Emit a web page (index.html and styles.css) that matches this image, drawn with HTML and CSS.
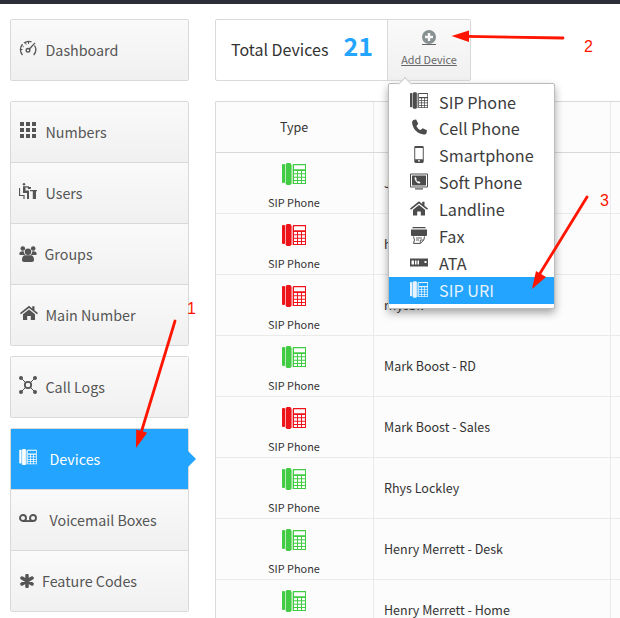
FILE: index.html
```
<!DOCTYPE html>
<html lang="en">
<head>
<meta charset="utf-8">
<title>Devices</title>
<link rel="stylesheet" href="styles.css">
</head>
<body>
<svg class="defs" width="0" height="0" aria-hidden="true">
  <symbol id="desk" viewBox="0 0 24 22">
    <rect x="0" y="1" width="3" height="19" rx="1"/>
    <rect x="3" y="1" width="7" height="20" opacity=".35"/>
    <rect x="4" y="0" width="5" height="22" rx="1.2"/>
    <rect x="9" y="2" width="2" height="19" opacity=".35"/>
    <path fill-rule="evenodd" d="M11 1h13v20H11zM12 2.300v4h11v-4zM12 8v2.200h3V8zm4 0v2.200h3V8zm4 0v2.200h3V8zM12 11.200v2.600h3v-2.600zm4 0v2.600h3v-2.600zm4 0v2.600h3v-2.600zM12 14.800V17h3v-2.200zm4 0V17h3v-2.200zm4 0V17h3v-2.200zM12 18v2h3v-2zm4 0v2h3v-2zm4 0v2h3v-2z"/>
  </symbol>
  <symbol id="house" viewBox="0 0 18 16">
    <path d="M0 8 9 .8l3.200 2.600V1.300h2.300v4L18 8l-1 1.200L9 3 1 9.200z"/>
    <path d="M3 9.200 9 4.600l6 4.600V15h-4.200v-4H7.200v4H3z"/>
  </symbol>
</svg>

<header class="topbar"></header>
<div class="page">
  <nav class="sidebar">
    <div class="group">
      <a class="item"><svg class="ico" viewBox="0 0 18 16"><path d="M3.500 15A8 8 0 0 1 3.500 4.200M5 3a8 8 0 0 1 7.500-1.200M15.500 5.500a8 8 0 0 1-.8 9.500" fill="none" stroke="currentColor" stroke-width="1.300"/><path d="M3.500 6l1.200.8M2 9.500h1.500M6.500 3l.7 1.500M9.500 2v2" stroke="currentColor"/><circle cx="9" cy="10.300" r="1.800" fill="none" stroke="currentColor" stroke-width="1.400"/><path d="m9.500 8.700 6.200-6.200.8.8-5.800 6.500z"/></svg><span>Dashboard</span></a>
    </div>
    <div class="group spaced">
      <a class="item"><svg class="ico" viewBox="0 0 18 16"><path d="M1 0h4v4H1zM7 0h4v4H7zM13 0h4v4h-4zM1 6h4v4H1zM7 6h4v4H7zM13 6h4v4h-4zM1 12h4v4H1zM7 12h4v4H7zM13 12h4v4h-4z"/></svg><span>Numbers</span></a>
      <a class="item"><svg class="ico" viewBox="0 0 18 16"><circle cx="5" cy="1.200" r="1.200"/><path d="M4 3.200h6v1.300H6.500v3H10V16H8v-6H4zM9 4h3v1H9zM11 7h7v1.300h-1V16h-3.200V8.300H11z"/><path d="M.5 5v7.500H5V16M8.800 5.500h3" fill="none" stroke="currentColor" stroke-width="1.200"/></svg><span>Users</span></a>
      <a class="item groups"><svg class="ico" viewBox="0 0 18 16"><circle cx="3.800" cy="2.500" r="2.300"/><circle cx="14.200" cy="2.500" r="2.300"/><circle cx="9" cy="5.700" r="3.200"/><path d="M.3 8c0-2 1.500-3 4.500-2.600.1 1.600.7 2.700 1.700 3.600H1.800C.8 9 .3 8.800.3 8zM17.700 8c0-2-1.500-3-4.500-2.600-.1 1.600-.7 2.700-1.700 3.600h4.700c1 0 1.500-.2 1.500-1zM5.300 9.200h7.400c1.500.8 2.300 2.300 2.300 4.800 0 1.300-.8 2-2 2H5c-1.200 0-2-.7-2-2 0-2.500.8-4 2.300-4.800z"/></svg><span>Groups</span></a>
      <a class="item"><svg class="ico home"><use href="#house"/></svg><span>Main Number</span></a>
    </div>
    <div class="group near">
      <a class="item logs"><svg class="ico" viewBox="0 0 18 18"><circle cx="2" cy="2" r="2"/><circle cx="16" cy="2" r="2"/><circle cx="2" cy="16" r="2"/><circle cx="16" cy="16" r="2"/><path d="m2 2 4 4M16 2l-4 4M2 16l4-4M16 16l-4-4" stroke="currentColor"/><circle cx="9" cy="9" r="3.200" fill="none" stroke="currentColor" stroke-width="1.800"/></svg><span>Call Logs</span></a>
    </div>
    <div class="group near">
      <a class="item active"><svg class="ico"><use href="#desk"/></svg><span>Devices</span></a>
      <a class="item voicemail"><svg class="ico" viewBox="0 0 18 8"><circle cx="4" cy="4" r="3" fill="none" stroke="currentColor" stroke-width="1.900"/><circle cx="14" cy="4" r="3" fill="none" stroke="currentColor" stroke-width="1.900"/><path d="M4 6.100h10V8H4z"/></svg><span>Voicemail Boxes</span></a>
      <a class="item codes"><svg class="ico" viewBox="0 0 14 14"><path d="M7 1.500v11M2 4l10 6M12 4 2 10" stroke="currentColor" stroke-width="3.500" stroke-linecap="round"/></svg><span>Feature Codes</span></a>
    </div>
  </nav>

  <main class="content">
    <div class="summary">
      <div class="total"><span>Total Devices</span><b>21</b></div>
      <a class="add"><svg class="plus" viewBox="0 0 14 14"><path fill-rule="evenodd" d="M7 0a7 7 0 1 1 0 14A7 7 0 0 1 7 0zM5.800 3v2.800H3v2.400h2.800V11h2.400V8.200H11V5.800H8.200V3z"/></svg><span>Add Device</span></a>
      <div class="menu">
        <a><svg><use href="#desk"/></svg><span>SIP Phone</span></a>
        <a><svg viewBox="0 0 16 16"><path d="M3.500.7 5.300.5l2 4-1.700 2c.7 1.800 2 3.100 3.900 3.900l2-1.700 4 2-.3 2.300c-.3 1.300-1.400 1.800-2.700 1.600C6.500 14 2.300 9.600 1.500 3.800 1.300 2.300 2 1 3.500.7z"/></svg><span>Cell Phone</span></a>
        <a><svg viewBox="0 0 18 18"><path fill-rule="evenodd" d="M5.500 0h7C13.500 0 14 .5 14 1.500v15c0 1-.5 1.500-1.500 1.500h-7C4.500 18 4 17.500 4 16.500v-15C4 .5 4.500 0 5.500 0zM5 2v12h8V2zM8 15v1.500h2V15z"/></svg><span>Smartphone</span></a>
        <a><svg viewBox="0 0 18 16"><path fill-rule="evenodd" d="M1 0h16q1 0 1 1v12q0 1-1 1H1q-1 0-1-1V1q0-1 1-1zM1 1v12h16V1z"/><path fill-rule="evenodd" d="M2 2h14v10H2zm3.200 1.300C3.300 5 6.500 10.200 9.600 10l.9-1.300-1.800-1-1 .6-1.600-2 .7-.9z"/><path d="M5 14.800h8V16H5z"/></svg><span>Soft Phone</span></a>
        <a><svg><use href="#house"/></svg><span>Landline</span></a>
        <a><svg viewBox="0 0 18 17"><path d="M3 0h12l1 1.300H2zM1 2.500h16V8q0 1-1 1H2q-1 0-1-1z"/><path d="M3.500 9.500 4.500 13 3.500 16.400h7l3.300-3.400.7-3.500" fill="none" stroke="currentColor"/><path d="M6 11h6M6 13h3M10.300 16v-3h3" fill="none" stroke="currentColor" stroke-width=".9"/></svg><span>Fax</span></a>
        <a><svg viewBox="0 0 18 8"><path fill-rule="evenodd" d="M0 0h18v8H0zM1.500 2v4H4V2zm3.500 0v4h1.500V2zm2.500 0v4H9V2zM14.500 2.500v2h2v-2z"/></svg><span>ATA</span></a>
        <a class="selected"><svg><use href="#desk"/></svg><span>SIP URI</span></a>
      </div>
    </div>

    <div class="table">
      <div class="row head"><div class="type">Type</div><div class="name"></div><div></div></div>
      <div class="row"><div class="type"><svg class="on"><use href="#desk"/></svg><span>SIP Phone</span></div><div class="name">J</div><div></div></div>
      <div class="row"><div class="type"><svg class="off"><use href="#desk"/></svg><span>SIP Phone</span></div><div class="name">h</div><div></div></div>
      <div class="row"><div class="type"><svg class="off"><use href="#desk"/></svg><span>SIP Phone</span></div><div class="name">rhysbil</div><div></div></div>
      <div class="row"><div class="type"><svg class="on"><use href="#desk"/></svg><span>SIP Phone</span></div><div class="name">Mark Boost - RD</div><div></div></div>
      <div class="row"><div class="type"><svg class="off"><use href="#desk"/></svg><span>SIP Phone</span></div><div class="name">Mark Boost - Sales</div><div></div></div>
      <div class="row"><div class="type"><svg class="on"><use href="#desk"/></svg><span>SIP Phone</span></div><div class="name">Rhys Lockley</div><div></div></div>
      <div class="row"><div class="type"><svg class="on"><use href="#desk"/></svg><span>SIP Phone</span></div><div class="name">Henry Merrett - Desk</div><div></div></div>
      <div class="row"><div class="type"><svg class="on"><use href="#desk"/></svg></div><div class="name">Henry Merrett - Home</div><div></div></div>
    </div>
  </main>
</div>

<svg class="notes" width="620" height="618" viewBox="0 0 620 618">
  <g stroke="#ff1500" stroke-width="2.800" stroke-linecap="round"><path d="M175 321 141 433M563 38 466 36.300M587 197l-48 78"/></g>
  <path fill="#ff1500" d="m136 448 .2-18.500 11 3.300zM451.500 36l17.500-5.500v11.500zM532 289l4-18 10 6z"/>
  <text x="187" y="314">1</text><text x="584" y="52">2</text><text x="600" y="206">3</text>
</svg>
</body>
</html>
```
FILE: styles.css
```
* { box-sizing: border-box; }
body { margin: 0; width: 620px; height: 618px; overflow: hidden; background: #fff; color: #333; font-family: "Noto Sans CJK SC", "Noto Sans", sans-serif; font-size: 13px; position: relative; }
svg { fill: currentColor; flex: none; }
.defs { position: absolute; }
.topbar { height: 4px; background: #2d2d39; }
.page { display: flex; gap: 26px; padding: 15px 0 0 10px; }

.sidebar { width: 179px; flex: none; }
.group { border: 1px solid #d9d9d9; border-radius: 2px; }
.spaced { margin-top: 20px; }
.near { margin-top: 10px; }
.item { display: flex; align-items: center; height: 60px; padding-left: 8px; color: #555; font-size: 14.300px; line-height: 20px; background: linear-gradient(#fafafa, #f0f0f0); position: relative; }
.item + .item { height: 61px; border-top: 1px solid #d9d9d9; }
.item span { margin-left: 8.500px; }
.ico { width: 18px; height: 16px; margin-top: -4px; }
.groups .ico { margin-top: -1px; }
.groups span { margin-left: 7.500px; }
.home { margin-left: 1px; margin-right: -1px; }
.logs .ico { height: 18px; }
.voicemail .ico { height: 8px; margin-top: -4px; }
.voicemail span, .active span { margin-left: 12.500px; }
.codes .ico { width: 14px; height: 14px; margin: 0 0 0 1px; }
.codes span { margin-left: 8px; }
.active { background: #22a4ff; color: #fff; }
.active::after { content: ""; position: absolute; right: -8px; top: 22px; border: 8px solid transparent; border-left-color: #22a4ff; border-right: 0; }

.content { flex: 1; min-width: 0; }
.summary { position: relative; display: flex; width: 256px; height: 62px; border: 1px solid #d9d9d9; border-radius: 2px; }
.total { width: 171px; display: flex; align-items: center; padding: 0 0 2px 15px; font-size: 16px; }
.total b { margin-left: 15px; color: #22a4ff; font-size: 25px; line-height: 30px; margin-top: -8px; }
.add { flex: 1; display: flex; flex-direction: column; align-items: center; padding-top: 10px; border-left: 1px solid #d9d9d9; background: linear-gradient(#fafafa, #f0f0f0); color: #666; font-size: 10.800px; line-height: 16px; text-decoration: underline; }
.plus { width: 14px; height: 15px; color: #899092; border-bottom: 1px solid #666; margin-bottom: 6px; }

.menu { position: absolute; z-index: 2; left: 172px; top: 63px; width: 167px; height: 226px; padding: 4px 0; border: 1px solid #bbb; background: #fff; border-radius: 2px; box-shadow: 0 4px 9px rgba(0, 0, 0, .35); }
.menu::before { content: ""; position: absolute; left: 11px; top: -5px; width: 9px; height: 9px; background: #fff; border: solid #ccc; border-width: 1px 0 0 1px; transform: rotate(45deg); }
.menu a { display: flex; align-items: center; height: 27px; padding-left: 21px; font-size: 16.200px; line-height: 27px; color: #3c3c3c; }
.menu a:first-child { height: 26px; margin-top: 1px; }
.menu svg { width: 18px; height: 17px; margin-right: 11px; margin-top: -3px; color: #4c4c4c; }
.menu .selected, .menu .selected svg { background: #22a4ff; color: #e6f3fc; }

.table { margin-top: 20px; border: 1px solid #d9d9d9; border-right: 0; border-radius: 2px 0 0; background: #fcfcfc; }
.row { display: grid; grid-template-columns: 157px 237px 1fr; height: 61px; border-bottom: 1px solid #eaeaea; }
.row > div + div { border-left: 1px solid #eaeaea; }
.head { height: 51px; border-color: #d9d9d9; }
.type { display: flex; flex-direction: column; align-items: center; padding: 10px 1px 0 0; font-size: 10.900px; line-height: 16px; }
.head .type { padding-top: 17px; font-size: 12.500px; }
.type svg { width: 24px; height: 22px; margin-bottom: 9px; }
.on { color: #41cc43; }
.off { color: #ee1318; }
.name { display: flex; align-items: center; padding: 0 0 1px 10px; font-size: 12.500px; }

.notes { position: absolute; z-index: 3; left: 0; top: 0; }
.notes text { fill: #ff1500; font: 16px "Liberation Sans", sans-serif; }
```
